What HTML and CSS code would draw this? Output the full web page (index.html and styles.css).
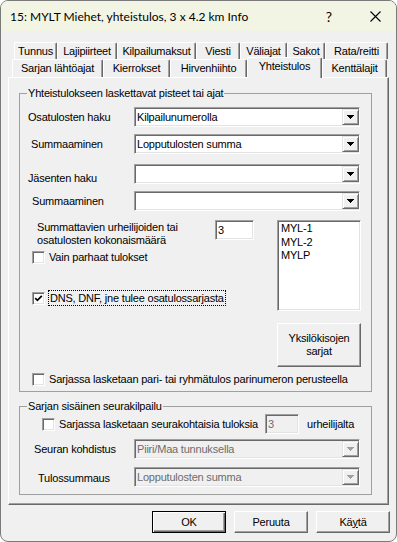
FILE: index.html
```html
<!DOCTYPE html>
<html lang="fi">
<head>
<meta charset="utf-8">
<title>15: MYLT Miehet, yhteistulos</title>
<link rel="stylesheet" href="styles.css">
</head>
<body>
<div class="window">
  <div class="titlebar">
    <span class="title">15: MYLT Miehet, yhteistulos, 3 x 4.2 km Info</span>
    <span class="help">?</span>
    <span class="close"><svg width="11" height="11" viewBox="0 0 11 11"><path d="M0.5 0.5L10.5 10.5M10.5 0.5L0.5 10.5" stroke="#000" stroke-width="1.1" fill="none"/></svg></span>
  </div>
  <div class="client">
    <div class="tabs">
      <div class="tabrow row1">
        <div class="tab t-tunnus">Tunnus</div>
        <div class="tab t-laji">Lajipiirteet</div>
        <div class="tab t-maksut">Kilpailumaksut</div>
        <div class="tab t-viesti">Viesti</div>
        <div class="tab t-valiajat">Väliajat</div>
        <div class="tab t-sakot">Sakot</div>
        <div class="tab t-rata">Rata/reitti</div>
      </div>
      <div class="tabrow row2">
        <div class="tab t-lahto">Sarjan lähtöajat</div>
        <div class="tab t-kierr">Kierrokset</div>
        <div class="tab t-hirvi">Hirvenhiihto</div>
        <div class="tab sel t-yht">Yhteistulos</div>
        <div class="tab t-kentta">Kenttälajit</div>
      </div>
    </div>

    <div class="panel">
      <fieldset class="group g1">
        <legend>Yhteistulokseen laskettavat pisteet tai ajat</legend>

        <div class="frow mt7">
          <span class="lbl in8">Osatulosten haku</span>
          <div class="combo"><span class="ctext">Kilpailunumerolla</span><span class="dd"><svg width="7" height="4" viewBox="0 0 7 4"><path d="M0 0H7V1H6V2H5V3H4V4H3V3H2V2H1V1H0Z" fill="#000"/></svg></span></div>
        </div>
        <div class="frow mt7">
          <span class="lbl in11">Summaaminen</span>
          <div class="combo"><span class="ctext">Lopputulosten summa</span><span class="dd"><svg width="7" height="4" viewBox="0 0 7 4"><path d="M0 0H7V1H6V2H5V3H4V4H3V3H2V2H1V1H0Z" fill="#000"/></svg></span></div>
        </div>
        <div class="frow mt10">
          <span class="lbl in8 low">Jäsenten haku</span>
          <div class="combo"><span class="ctext"></span><span class="dd"><svg width="7" height="4" viewBox="0 0 7 4"><path d="M0 0H7V1H6V2H5V3H4V4H3V3H2V2H1V1H0Z" fill="#000"/></svg></span></div>
        </div>
        <div class="frow mt7">
          <span class="lbl in12">Summaaminen</span>
          <div class="combo"><span class="ctext"></span><span class="dd"><svg width="7" height="4" viewBox="0 0 7 4"><path d="M0 0H7V1H6V2H5V3H4V4H3V3H2V2H1V1H0Z" fill="#000"/></svg></span></div>
        </div>

        <div class="mid">
          <div class="mid-left">
            <div class="caption">Summattavien urheilijoiden tai<br>osatulosten kokonaismäärä</div>
            <div class="chk chk-vain">
              <span class="box"></span>
              <span class="chklbl">Vain parhaat tulokset</span>
            </div>
            <div class="chk chk-dns">
              <span class="box"><svg width="9" height="9" viewBox="0 0 9 9"><path d="M1.2 4.2L3.4 6.4L7.8 1.8" stroke="#000" stroke-width="1.7" fill="none"/></svg></span>
              <span class="chklbl focus">DNS, DNF, jne tulee osatulossarjasta</span>
            </div>
          </div>
          <div class="edit num">3</div>
          <div class="mid-right">
            <div class="listbox">
              <div class="item">MYL-1</div>
              <div class="item">MYL-2</div>
              <div class="item">MYLP</div>
            </div>
            <div class="btn btn-yks">Yksilökisojen<br>sarjat</div>
          </div>
        </div>

        <div class="chk chk-pari">
          <span class="box"></span>
          <span class="chklbl">Sarjassa lasketaan pari- tai ryhmätulos parinumeron perusteella</span>
        </div>
      </fieldset>

      <fieldset class="group g2">
        <legend>Sarjan sisäinen seurakilpailu</legend>
        <div class="frow mt1">
          <div class="chk chk-seura">
            <span class="box"></span>
            <span class="chklbl seuralbl">Sarjassa lasketaan seurakohtaisia tuloksia</span>
          </div>
          <div class="edit disabled seuranum">3</div>
          <span class="after">urheilijalta</span>
        </div>
        <div class="frow mt5">
          <span class="lbl in14">Seuran kohdistus</span>
          <div class="combo disabled"><span class="ctext">Piiri/Maa tunnuksella</span><span class="dd"><svg width="7" height="4" viewBox="0 0 7 4"><path d="M0 0H7V1H6V2H5V3H4V4H3V3H2V2H1V1H0Z" fill="#a0a0a0"/></svg></span></div>
        </div>
        <div class="frow mt8">
          <span class="lbl in18 low1">Tulossummaus</span>
          <div class="combo disabled"><span class="ctext">Lopputulosten summa</span><span class="dd"><svg width="7" height="4" viewBox="0 0 7 4"><path d="M0 0H7V1H6V2H5V3H4V4H3V3H2V2H1V1H0Z" fill="#a0a0a0"/></svg></span></div>
        </div>
      </fieldset>
    </div>

    <div class="buttons">
      <div class="btn default">OK</div>
      <div class="btn">Peruuta</div>
      <div class="btn">K&auml;<u>y</u>t&auml;</div>
    </div>
  </div>
</div>
</body>
</html>
```

FILE: styles.css
```css
* { box-sizing: border-box; }

html, body {
  margin: 0;
  padding: 0;
  background: #ffffff;
}

body {
  width: 397px;
  height: 542px;
  overflow: hidden;
  font-family: "Liberation Sans", Arial, sans-serif;
  font-size: 11px;
  color: #000;
}

.window {
  width: 397px;
  height: 542px;
  border: 1px solid #7a7a7a;
  border-radius: 8px;
  background: #f0f0f0;
  overflow: hidden;
  display: flex;
  flex-direction: column;
}

/* ---------- title bar ---------- */
.titlebar {
  height: 30px;
  flex: none;
  background: #f3f5e4;
  display: flex;
  align-items: center;
  font-family: Lato, "Noto Sans", sans-serif;
  font-size: 12px;
}

.title {
  flex: 1;
  padding-left: 9px;
  white-space: nowrap;
}

.help,
.close {
  height: 30px;
  display: flex;
  align-items: center;
  justify-content: center;
}

.help {
  width: 50px;
  font-size: 14px;
}

.close {
  width: 42px;
}

.client {
  flex: 1;
  letter-spacing: -0.2px;
}

/* ---------- tabs ---------- */
.tabs {
  margin-top: 11px;
}

.tabrow {
  display: flex;
}

.row1 {
  height: 17px;
  margin-left: 13px;
}

.row2 {
  height: 18px;
  margin-left: 11px;
}

.tab {
  height: 100%;
  flex: none;
  background: #f0f0f0;
  border-top: 1px solid #fff;
  border-left: 1px solid #fff;
  border-right: 1px solid #696969;
  box-shadow: inset -1px 0 #a0a0a0;
  border-top-left-radius: 2px;
  border-top-right-radius: 2px;
  display: flex;
  align-items: center;
  justify-content: center;
  white-space: nowrap;
  line-height: 13px;
}

.tab.sel {
  height: 21px;
  margin-top: -2px;
  align-items: flex-start;
  padding-top: 2px;
  position: relative;
  z-index: 1;
}

.t-tunnus { width: 43px; }
.t-laji { width: 60px; }
.t-maksut { width: 79px; }
.t-viesti { width: 44px; }
.t-valiajat { width: 47px; }
.t-sakot { width: 38px; }
.t-rata { width: 63px; }

.t-lahto { width: 91px; }
.t-kierr { width: 67px; }
.t-hirvi { width: 77px; }
.t-yht { width: 75px; }
.t-kentta { width: 65px; }

/* ---------- panel ---------- */
.panel {
  margin-left: 7px;
  width: 381px;
  height: 428px;
  border-top: 1px solid #fff;
  border-left: 1px solid #fff;
  border-right: 1px solid #696969;
  border-bottom: 1px solid #696969;
  box-shadow: inset -1px -1px #a0a0a0;
  padding: 9px 0 0 10px;
}

.group {
  margin: 0;
  padding: 0;
  border: 1px solid #a0a0a0;
  width: 353px;
  min-inline-size: 0;
}

.group legend {
  padding: 0 1px;
  margin-left: 7px;
  line-height: 13px;
}

.g1 { height: 305px; }
.g2 { height: 95px; margin-top: 8px; }

.frow {
  display: flex;
  align-items: center;
  height: 20px;
}

.mt1 { margin-top: 1px; }
.mt5 { margin-top: 5px; }
.mt7 { margin-top: 7px; }
.mt8 { margin-top: 8px; }
.mt10 { margin-top: 10px; }

.lbl {
  width: 114px;
  flex: none;
  white-space: nowrap;
  line-height: 13px;
}

.in8 { padding-left: 8px; }
.in11 { padding-left: 11px; }
.in12 { padding-left: 12px; }
.in14 { padding-left: 14px; }
.in18 { padding-left: 18px; }
.low { padding-top: 8px; }
.low1 { padding-top: 2px; }

/* sunken edit-like frames */
.combo,
.edit,
.listbox,
.box {
  background: #fff;
  border: 1px solid;
  border-color: #a0a0a0 #fff #fff #a0a0a0;
  box-shadow: inset 1px 1px #696969, inset -1px -1px #e3e3e3;
}

.combo {
  width: 226px;
  height: 20px;
  flex: none;
  display: flex;
  align-items: center;
  padding-left: 2px;
}

.ctext {
  flex: 1;
  white-space: nowrap;
  line-height: 13px;
}

.dd {
  width: 17px;
  height: 16px;
  flex: none;
  background: #f0f0f0;
  border: 1px solid;
  border-color: #e3e3e3 #696969 #696969 #e3e3e3;
  box-shadow: inset 1px 1px #fff, inset -1px -1px #a0a0a0;
  display: flex;
  align-items: center;
  justify-content: center;
}

.dd svg { display: block; }

.disabled {
  background: #f0f0f0;
  color: #6d6d6d;
}

/* ---------- middle block ---------- */
.mid {
  display: flex;
  align-items: flex-start;
}

.mid-left {
  width: 195px;
  flex: none;
}

.caption {
  margin-top: 10px;
  margin-left: 17px;
  line-height: 13px;
}

.chk {
  display: flex;
  align-items: center;
}

.box {
  width: 13px;
  height: 13px;
  flex: none;
  display: flex;
  align-items: center;
  justify-content: center;
}

.box svg { display: block; }

.chklbl {
  margin-left: 4px;
  white-space: nowrap;
  line-height: 13px;
}

.chklbl.focus {
  margin-left: 3px;
  border: 1px dotted #000;
  padding: 0 1px;
  line-height: 14px;
}

.chk-vain {
  margin-top: 4px;
  margin-left: 12px;
}

.chk-dns {
  margin-top: 26px;
  margin-left: 12px;
}

.edit {
  line-height: 13px;
  padding-left: 2px;
  display: flex;
  align-items: center;
}

.num {
  width: 39px;
  height: 20px;
  margin-top: 9px;
  flex: none;
}

.mid-right {
  width: 84px;
  margin-left: 23px;
  flex: none;
}

.listbox {
  height: 91px;
  margin-top: 9px;
  padding: 1px 0 0 3px;
}

.item {
  line-height: 13.5px;
}

.btn {
  background: #f0f0f0;
  border: 1px solid;
  border-color: #fff #696969 #696969 #fff;
  box-shadow: inset -1px -1px #a0a0a0, inset 1px 1px #f0f0f0;
  display: flex;
  align-items: center;
  justify-content: center;
  text-align: center;
  line-height: 13px;
}

.btn-yks {
  height: 44px;
  margin-top: 12px;
}

.chk-pari {
  margin-top: 6px;
  margin-left: 12px;
}

/* ---------- group 2 ---------- */
.chk-seura {
  margin-left: 22px;
}

.seuralbl {
  width: 206px;
}

.seuranum {
  width: 34px;
  height: 20px;
  flex: none;
}

.after {
  margin-left: 8px;
  white-space: nowrap;
}

/* ---------- dialog buttons ---------- */
.buttons {
  display: flex;
  justify-content: flex-end;
  gap: 8px;
  padding-right: 6px;
  margin-top: 6px;
}

.buttons .btn {
  width: 74px;
  height: 22px;
}

.btn.default {
  border-color: #000;
  box-shadow: inset 1px 1px #fff, inset -1px -1px #696969, inset -2px -2px #a0a0a0;
}

.btn u {
  text-decoration: underline;
}
```
